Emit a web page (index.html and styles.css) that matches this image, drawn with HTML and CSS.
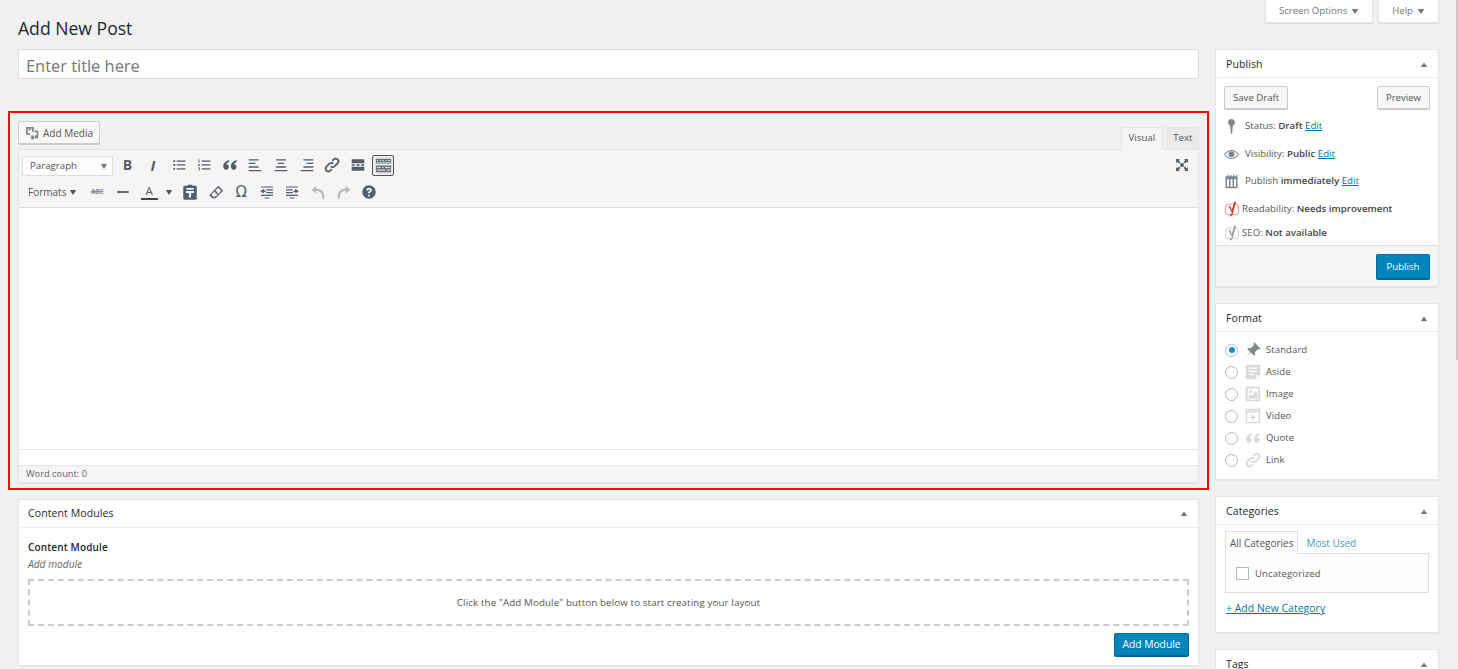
FILE: index.html
```html
<!DOCTYPE html>
<html lang="en">
<head>
<meta charset="utf-8">
<title>Add New Post</title>
<link rel="stylesheet" href="styles.css">
</head>
<body>
<svg class="defs" width="0" height="0" aria-hidden="true">
  <symbol id="tri-up" viewBox="0 0 10 8"><path d="M5 1.500 9 7H1z"/></symbol>
  <symbol id="tri-down" viewBox="0 0 10 8"><path d="M1 1h8L5 7z"/></symbol>
  <symbol id="quote" viewBox="0 0 20 20"><path d="M9 4.500C5.500 5.500 2.500 7.500 2.500 11.500c0 2.200 1.300 3.800 3.100 3.800s3.100-1.400 3.100-3.100-1.200-2.900-2.800-2.900c.3-1.200 1.600-2.200 3.100-2.900zM17.500 4.500c-3.500 1-6.500 3-6.500 7 0 2.200 1.300 3.800 3.100 3.800s3.100-1.400 3.100-3.100-1.200-2.900-2.800-2.900c.3-1.200 1.600-2.200 3.100-2.900z"/></symbol>
  <symbol id="link" viewBox="0 0 20 20"><path fill="none" stroke="currentColor" stroke-width="2" d="M8.500 11.500a3 3 0 0 0 4.300 0l3.400-3.400a3 3 0 0 0-4.300-4.300l-1.600 1.600M11.500 8.500a3 3 0 0 0-4.300 0l-3.400 3.400a3 3 0 0 0 4.300 4.300l1.600-1.600"/></symbol>
</svg>

<div class="page">
  <div class="screen-tabs">
    <span class="screen-tab">Screen Options <svg class="tri"><use href="#tri-down"/></svg></span>
    <span class="screen-tab">Help <svg class="tri"><use href="#tri-down"/></svg></span>
  </div>

  <div class="columns">
    <main class="main">
      <h1 class="page-title">Add New Post</h1>
      <div class="title-input">Enter title here</div>

      <section class="editor-frame">
        <div class="editor-tools">
          <button class="btn media-btn">
            <svg class="media-icon" viewBox="0 0 20 20"><path fill-rule="evenodd" d="M1.500 1.500h11v6.800H10V4H4v6h3.200v2.500H1.500zM5.300 5.300a1.400 1.400 0 1 1 2.800 0 1.400 1.400 0 0 1-2.800 0zM13.500 6.500h5.500v9a2.600 2.600 0 1 1-2.200-2.600V9h-3.300zM8 13.500h5v3.500a2.300 2.300 0 1 1-2.200-2.300H8z"/></svg>
            Add Media
          </button>
          <div class="editor-tabs">
            <span class="editor-tab active">Visual</span>
            <span class="editor-tab">Text</span>
          </div>
        </div>

        <div class="editor-box">
          <div class="toolbar">
            <div class="tb-row">
              <div class="tb-select">Paragraph <svg class="tri"><use href="#tri-down"/></svg></div>
              <span class="tb tb-bold">B</span>
              <span class="tb tb-ital">I</span>
              <span class="tb tb-sm"><svg viewBox="0 0 20 20"><path d="M7 4.500h11V6H7zM7 9.200h11v1.500H7zM7 14h11v1.500H7zM3 4h2.200v2.200H3zM3 8.900h2.200v2.200H3zM3 13.700h2.200v2.200H3z"/></svg></span>
              <span class="tb tb-sm"><svg viewBox="0 0 20 20"><path d="M7 4.500h11V6H7zM7 9.200h11v1.500H7zM7 14h11v1.500H7zM3.200 3h1.100v4.200H3.200zM2.500 8.700h2.400v.9L3.700 10.600h1.200v.7H2.500v-.8l1.400-1.100H2.500zM2.500 13h2.400v3.500H2.500v-.7h1.600v-.7H3v-.6h1.100v-.8H2.500z"/></svg></span>
              <span class="tb"><svg><use href="#quote"/></svg></span>
              <span class="tb"><svg viewBox="0 0 20 20"><path d="M3 3.500h11V5H3zM3 7.500h7.500V9H3zM3 11.500h11V13H3zM3 15.500h14V17H3z"/></svg></span>
              <span class="tb"><svg viewBox="0 0 20 20"><path d="M4.500 3.500h11V5h-11zM6.500 7.500h7V9h-7zM4.500 11.500h11V13h-11zM3 15.500h14V17H3z"/></svg></span>
              <span class="tb"><svg viewBox="0 0 20 20"><path d="M6 3.500h11V5H6zM9.500 7.500H17V9H9.500zM6 11.500h11V13H6zM3 15.500h14V17H3z"/></svg></span>
              <span class="tb"><svg><use href="#link"/></svg></span>
              <span class="tb"><svg viewBox="0 0 20 20"><path d="M3 3.500h14v4.500H3zM3 9.300h3.500v1.400H3zM8.200 9.300h3.600v1.400H8.200zM13.500 9.300H17v1.400h-3.500zM3 12h14v4.500H3z"/></svg></span>
              <span class="tb kitchen"><svg viewBox="0 0 20 20"><path d="M2 3h16v5H2zM2 10h16v7H2z" fill="#6b7076"/><path d="M3 4.200h1.500v1H3zM6 4.200h1.500v1H6zM9 4.200h1.500v1H9zM12 4.200h1.500v1H12zM15 4.200h2v1h-2zM3 6.200h14v.8H3zM3 11.500h4v1.200H3zM8.500 11.500H10v1.200H8.500zM11.500 11.500H17v1.200h-5.500zM3 14.200h9v1.200H3zM13.500 14.200H17v1.200h-3.500z" fill="#dcdcdc"/></svg></span>
              <span class="tb tb-end"><svg viewBox="0 0 20 20"><path d="M1.500 1.500H7L5.300 3.300 7.800 5.800 5.800 7.800 3.300 5.300 1.500 7zM18.500 1.500V7l-1.800-1.700-2.500 2.500-2-2 2.500-2.500L13 1.500zM1.500 18.500V13l1.800 1.700 2.500-2.500 2 2-2.500 2.500L7 18.500zM18.500 18.500H13l1.700-1.800-2.500-2.500 2-2 2.500 2.500L18.500 13zM7.500 7.500h5v5h-5z"/></svg></span>
            </div>
            <div class="tb-row tb-row-2">
              <span class="tb-formats">Formats <svg class="tri"><use href="#tri-down"/></svg></span>
              <span class="tb tb-abc">ABC</span>
              <span class="tb"><svg viewBox="0 0 20 20"><path d="M3.500 9h13v2h-13z"/></svg></span>
              <span class="tb-color">
                <span class="color-a">A</span>
                <svg class="tri"><use href="#tri-down"/></svg>
              </span>
              <span class="tb"><svg viewBox="0 0 20 20"><path d="M7.500 3V2h5v1H16a1.500 1.500 0 0 1 1.500 1.500V17A1.500 1.500 0 0 1 16 18.500H4A1.500 1.500 0 0 1 2.500 17V4.500A1.500 1.500 0 0 1 4 3zM6 5.500v2h8v-2H9zM5.500 9v2h3.300v5h2.400v-5h3.300V9z" fill-rule="evenodd"/></svg></span>
              <span class="tb"><svg viewBox="0 0 20 20"><path d="M12.500 3 18 8.500 9.500 17H6l-3.500-3.500zM12.500 5.200 9.300 8.400 13 12.100l2.800-3.600zM8.200 9.500 4.800 12.800l2 2.500h2l3-2.100z" fill-rule="evenodd"/></svg></span>
              <span class="tb tb-omega">Ω</span>
              <span class="tb tb-sm"><svg viewBox="0 0 20 20"><path d="M2.500 3h15v1.500h-15zM9 6.500h8.500V8H9zM9 10h8.500v1.500H9zM2.500 13.500h15V15h-15zM7 17h6v1H7zM1.500 9 6 6v2h2v2H6v2z"/></svg></span>
              <span class="tb tb-sm"><svg viewBox="0 0 20 20"><path d="M2.500 3h15v1.500h-15zM2.500 6.500H11V8H2.500zM2.500 10H11v1.500H2.500zM2.500 13.500h15V15h-15zM7 17h6v1H7zM18.500 9 14 6v2h-2v2h2v2z"/></svg></span>
              <span class="tb muted"><svg viewBox="0 0 20 20"><path d="M3 7.500 8 3v3c5 0 9 3 9 9v2.500h-2.500V15c0-3.800-2.700-6-6.500-6v3z"/></svg></span>
              <span class="tb muted"><svg viewBox="0 0 20 20"><path d="M17 7.500 12 3v3c-5 0-9 3-9 9v2.500h2.500V15c0-3.800 2.700-6 6.500-6v3z"/></svg></span>
              <span class="tb"><svg viewBox="0 0 20 20"><path fill-rule="evenodd" d="M10 2.500a7.500 7.500 0 1 1 0 15 7.500 7.500 0 0 1 0-15zM7 8.200h2c.1-.7.500-1 1-1 .6 0 1 .3 1 .9 0 .5-.3.8-.9 1.200-.9.600-1.200 1.200-1.200 2.200h1.900c0-.5.200-.8.900-1.200 1-.6 1.400-1.300 1.400-2.300 0-1.700-1.300-2.600-3.100-2.600-1.700 0-2.900.9-3 2.800zM8.900 13v1.900h1.900V13z"/></svg></span>
            </div>
          </div>
          <div class="editor-content"></div>
          <div class="editor-resize"></div>
          <div class="status-bar">Word count: 0</div>
        </div>
      </section>

      <section class="box modules-box">
        <header class="box-head">Content Modules <svg class="tri"><use href="#tri-up"/></svg></header>
        <div class="modules-body">
          <div class="field-title">Content Module</div>
          <div class="field-sub">Add module</div>
          <div class="dropzone">Click the "Add Module" button below to start creating your layout</div>
          <div class="right-row"><button class="btn primary">Add Module</button></div>
        </div>
      </section>
    </main>

    <aside class="side">
      <section class="box publish-box">
        <header class="box-head">Publish <svg class="tri"><use href="#tri-up"/></svg></header>
        <div class="publish-actions">
          <button class="btn">Save Draft</button>
          <button class="btn">Preview</button>
        </div>
        <div class="pub-row r-status">
          <svg class="pub-icon" viewBox="0 0 20 20"><path d="M10 0a4.600 4.600 0 0 1 1.800 8.800L10.800 19.500H9.200L8.200 8.800A4.600 4.600 0 0 1 10 0z"/></svg>
          <span>Status: <b>Draft</b> <a>Edit</a></span>
        </div>
        <div class="pub-row r-vis">
          <svg class="pub-icon" viewBox="0 0 20 20"><path fill-rule="evenodd" d="M10 4c4 0 7.500 2.500 10 6-2.500 3.500-6 6-10 6s-7.500-2.500-10-6c2.500-3.500 6-6 10-6zM10 5.300C7 5.300 3.700 7.300 1.800 10c1.900 2.700 5.200 4.700 8.200 4.700s6.300-2 8.200-4.700c-1.900-2.700-5.200-4.700-8.200-4.700z"/><circle cx="10" cy="9.800" r="4"/></svg>
          <span>Visibility: <b>Public</b> <a>Edit</a></span>
        </div>
        <div class="pub-row r-date">
          <svg class="pub-icon" viewBox="0 0 20 20"><path fill-rule="evenodd" d="M2 3h2.500V1H6v2h2.500V1H10v2h2.500V1H14v2h2.500V1H18v18H2zM4 7v10h2.500V7zM8.700 7v10h2.600V7zM13.500 7v10H16V7z"/></svg>
          <span><span>Publish <b>immediately</b></span> <a>Edit</a></span>
        </div>
        <div class="pub-row r-read">
          <svg class="yoast" viewBox="0 0 20 20"><path fill="none" stroke="#dc3232" stroke-width="1" d="M5 4h10a3 3 0 0 1 3 3v7a3 3 0 0 1-3 3H5a3 3 0 0 1-3-3V7a3 3 0 0 1 3-3z" opacity=".7"/><path fill="#fff" stroke="#fff" stroke-width="2" d="M7 6h2l1.500 5L13 1h2.500"/><path fill="#dc3232" d="M5.500 6.500h2.300l2 5L12.600 1H15l-4 15c-.4 1.700-1.500 3-3.500 3.500v-1.800c1-.4 1.700-1 2-2.300l.3-1.100z"/></svg>
          <span>Readability: <b>Needs improvement</b></span>
        </div>
        <div class="pub-row r-seo">
          <svg class="yoast" viewBox="0 0 20 20"><path fill="none" stroke="#aaa" stroke-width="1" d="M5 4h10a3 3 0 0 1 3 3v7a3 3 0 0 1-3 3H5a3 3 0 0 1-3-3V7a3 3 0 0 1 3-3z" opacity=".7"/><path fill="#fff" stroke="#fff" stroke-width="2" d="M7 6h2l1.500 5L13 1h2.500"/><path fill="#999" d="M5.500 6.500h2.300l2 5L12.600 1H15l-4 15c-.4 1.700-1.500 3-3.500 3.500v-1.800c1-.4 1.700-1 2-2.300l.3-1.100z"/></svg>
          <span>SEO: <b>Not available</b></span>
        </div>
        <div class="publish-foot"><button class="btn primary">Publish</button></div>
      </section>

      <section class="box format-box">
        <header class="box-head">Format <svg class="tri"><use href="#tri-up"/></svg></header>
        <ul class="formats">
          <li><span class="radio checked"></span><svg class="fmt dark" viewBox="0 0 20 20"><path d="M11.500 1.500 18.500 8.500 17 9.500 15.800 8.800 12 12.500c.6 1.500.3 3-.7 4L7.600 12.900 2 18l5.100-5.600L3.500 8.700c1-1 2.500-1.300 4-.7l3.700-3.800-.7-1.200z"/></svg>Standard</li>
          <li><span class="radio"></span><svg class="fmt" viewBox="0 0 20 20"><path fill-rule="evenodd" d="M2 2h16v11l-5 5H2zM5 5v1.500h10V5zM5 8.500V10h10V8.500zM5 12v1.500h6V12zM13 13.500V17l4-3.500z"/></svg>Aside</li>
          <li><span class="radio"></span><svg class="fmt" viewBox="0 0 20 20"><path fill-rule="evenodd" d="M2 2h16v16H2zM4 4v12h12V4zM7.500 5.500a1.700 1.700 0 1 1 0 3.400 1.700 1.700 0 0 1 0-3.400zM5 15v-3l2.500-1.500L9.500 12 13 6l2 3v6z"/></svg>Image</li>
          <li><span class="radio"></span><svg class="fmt" viewBox="0 0 20 20"><path fill-rule="evenodd" d="M2 2h16v16H2zM3.500 6v10.500h13V6zM3.500 3.500v1.200h2v-1.200zM7 3.500v1.200h2v-1.200zM10.500 3.500v1.200h2v-1.200zM14 3.500v1.200h2v-1.200zM8 8l5.500 3.300L8 14.500z"/></svg>Video</li>
          <li><span class="radio"></span><svg class="fmt"><use href="#quote"/></svg>Quote</li>
          <li><span class="radio"></span><svg class="fmt"><use href="#link"/></svg>Link</li>
        </ul>
      </section>

      <section class="box cat-box">
        <header class="box-head">Categories <svg class="tri"><use href="#tri-up"/></svg></header>
        <div class="cat-tabs">
          <span class="cat-tab active">All Categories</span>
          <a class="cat-tab">Most Used</a>
        </div>
        <div class="cat-panel"><span class="checkbox"></span>Uncategorized</div>
        <a class="cat-add">+ Add New Category</a>
      </section>

      <section class="box tags-box">
        <header class="box-head">Tags <svg class="tri"><use href="#tri-up"/></svg></header>
      </section>
    </aside>
  </div>
</div>
<div class="scroll-thumb"></div>
</body>
</html>
```

FILE: styles.css
```css
* { box-sizing: border-box; }
html, body { margin: 0; height: 100%; overflow: hidden; }
body {
  background: #f1f1f1;
  color: #444;
  font: 10.5px/1.4 "Open Sans", "Noto Sans", sans-serif;
}
.defs { position: absolute; }
.page { height: 669px; overflow: hidden; padding: 0 19px 0 18px; }
.tri { width: 8px; height: 7px; fill: #72777c; flex: none; }
button { font: inherit; white-space: nowrap; }

.screen-tabs { display: flex; justify-content: flex-end; gap: 5px; height: 0; }
.screen-tab {
  height: 23px; padding: 0 13px;
  display: flex; align-items: center; gap: 4px;
  background: #fff; border: 1px solid #e4e4e4; border-top: 0;
  box-shadow: 0 1px 1px rgba(0,0,0,.08); color: #72777c;
  font-size: 9.600px;
}
.columns { display: flex; gap: 16px; }
.main { width: 1181px; flex: none; }
.side { width: 224px; flex: none; padding-top: 49px; display: flex; flex-direction: column; gap: 16px; }

.page-title { margin: 0; height: 49px; padding-top: 15px; font-size: 17.600px; line-height: 26px; font-weight: 400; color: #23282d; }
.title-input {
  height: 30px; padding: 0 7px; line-height: 31px;
  background: #fff; border: 1px solid #ddd;
  font-size: 16.400px; color: #72777c;
}
.editor-frame { margin: 32px -10px 0; padding: 8px; border: 2px solid #f00; height: 379px; }
.editor-tools { display: flex; justify-content: space-between; align-items: flex-end; height: 28px; }
.btn {
  display: inline-flex; align-items: center; justify-content: center; gap: 5px;
  height: 24px; padding: 0 8px;
  background: #f7f7f7; border: 1px solid #ccc; border-radius: 2px;
  box-shadow: 0 1px 0 #ccc; color: #555;
  font-size: 9.600px;
}
.media-btn { width: 82px; height: 23px; align-self: flex-start; gap: 4px; padding: 0 6px; font-size: 10px; }
.media-icon { width: 14px; height: 14px; fill: #82878c; flex: none; }
.primary { background: #0085ba; border-color: #0073aa #006799 #006799; box-shadow: 0 1px 0 #006799; color: #fff; height: 23px; }
.editor-tabs { display: flex; gap: 4px; align-items: flex-end; }
.editor-tab {
  height: 22px; padding: 0 5.500px 2px; display: flex; align-items: center;
  background: #ebebeb; border: 1px solid #e5e5e5; border-bottom: 0;
  color: #555; font-size: 9.700px;
}
.editor-tab.active { background: #f5f5f5; height: 23px; padding: 0 6.500px 3px; position: relative; top: 1px; }
.editor-box { border: 1px solid #e5e5e5; background: #fff; box-shadow: 0 1px 1px rgba(0,0,0,.04); }
.toolbar { height: 58px; padding: 2px 4px 0 3px; background: #f5f5f5; border-bottom: 1px solid #dedede; }
.tb-row { display: flex; align-items: center; height: 26px; }
.tb-row-2 { margin-top: 1px; }
.tb-select {
  width: 91px; height: 20px; padding: 0 4px 0 7px; margin: 2px 1.600px 0 0;
  display: flex; align-items: center; justify-content: space-between;
  background: #fdfdfd; border: 1px solid #ddd; color: #555; font-size: 9.700px;
}
.tb { width: 25.600px; height: 24px; display: flex; align-items: center; justify-content: center; color: #555d66; flex: none; }
.tb svg { width: 18px; height: 18px; fill: currentColor; }
.tb-sm svg { width: 16px; height: 16px; }
.tb-bold { font: 700 14px/1 "Open Sans", sans-serif; }
.tb-ital { font: italic 700 15px/1 "Open Sans", sans-serif; }
.tb-abc { font: 700 6.500px/1 "Open Sans", sans-serif; color: #8a8f94; text-decoration: line-through; letter-spacing: -.2px; }
.tb-omega { font: 400 15px/1 "DejaVu Sans", sans-serif; }
.tb.muted { color: #bbb; }
.tb.kitchen svg { width: 19px; height: 19px; }
.tb.kitchen { width: 22px; height: 21px; margin-left: 1.800px; border: 1px solid #555; border-radius: 2px; background: #ebebeb; }
.tb-end { margin-left: auto; width: 22px; margin-right: 1px; }
.tb-end svg { width: 14px; height: 14px; }
.tb-formats { width: 62.400px; flex: none; padding-left: 6px; color: #555; font-size: 10px; display: flex; gap: 3px; align-items: center; }
.tb-formats .tri { fill: #555; }
.tb-color { width: 41.600px; flex: none; display: flex; align-items: center; gap: 7px; padding-left: 5px; color: #555; }
.color-a { display: block; width: 17px; text-align: center; border-bottom: 2px solid #444; font-size: 11.500px; line-height: 14px; }
.tb-color .tri { fill: #555; }
.editor-content { height: 241px; }
.editor-resize { height: 16px; border-top: 1px solid #e5e5e5; }
.status-bar { height: 17px; padding: 0 7px; background: #f5f5f5; border-top: 1px solid #e5e5e5; color: #666; font-size: 9.300px; line-height: 16px; }

.box { background: #fff; border: 1px solid #e5e5e5; box-shadow: 0 1px 1px rgba(0,0,0,.04); }
.box-head {
  height: 28px; padding: 0 10px 0 9px; display: flex; align-items: center; justify-content: space-between;
  border-bottom: 1px solid #eee; color: #23282d; font-size: 10.500px; letter-spacing: .1px;
}
.side .box-head { padding: 2px 10px 0; }
.modules-box { margin-top: 9px; height: 167px; }
.modules-body { padding: 12px 9px 0; }
.field-title { font-weight: 600; color: #23282d; font-size: 10px; line-height: 15px; letter-spacing: .15px; }
.field-sub { font-style: italic; color: #666; font-size: 10.200px; line-height: 14px; margin-top: 2px; }
.dropzone { height: 47px; margin-top: 8px; border: 2px dashed #ccc; display: flex; align-items: center; justify-content: center; color: #555; font-size: 9.750px; letter-spacing: .12px; }
.right-row { display: flex; justify-content: flex-end; margin-top: 7px; }
.modules-box .primary { width: 75px; font-size: 10.300px; }

.publish-box { height: 238px; display: flex; flex-direction: column; }
.publish-actions { display: flex; justify-content: space-between; padding: 8px 8px 0; }
.publish-actions .btn { height: 23px; }
.pub-row { display: flex; align-items: center; gap: 6px; padding-left: 8px; height: 18px; color: #555; font-size: 9.700px; }
.pub-row b { font-weight: 600; color: #444; }
.pub-row a { color: #0073aa; text-decoration: underline; }
.pub-icon { width: 15px; height: 15px; fill: #82878c; flex: none; }
.yoast { width: 16px; height: 18px; flex: none; margin-right: -4px; }
.r-status { margin-top: 8px; }
.r-vis { margin-top: 10px; }
.r-date { margin-top: 9px; }
.r-read { margin-top: 10px; }
.r-seo { margin-top: 6px; }
.publish-foot { margin-top: auto; height: 41px; display: flex; justify-content: flex-end; align-items: center; padding: 1px 8px 0 0; background: #f5f5f5; border-top: 1px solid #ddd; }
.publish-foot .btn { width: 54px; height: 25px; }

.format-box { height: 177px; }
.formats { list-style: none; margin: 0; padding: 7px 8px 0 9px; }
.formats li { height: 22px; display: flex; align-items: center; color: #555; font-size: 9.500px; letter-spacing: .1px; }
.radio { width: 13px; height: 13px; border: 1px solid #b4b9be; border-radius: 50%; margin-right: 5.500px; background: #fff; display: flex; align-items: center; justify-content: center; flex: none; }
.radio.checked::after { content: ""; width: 6px; height: 6px; background: #1e8cbe; border-radius: 50%; }
.fmt { width: 18px; height: 18px; margin-right: 4.500px; fill: #d9d9d9; color: #d9d9d9; flex: none; }
.fmt.dark { fill: #82878c; }

.cat-box { height: 137px; }
.cat-tabs { display: flex; margin: 6px 0 0 9px; height: 23px; }
.cat-tab { padding: 0 4px; display: flex; align-items: center; color: #0073aa; font-size: 10px; border: 1px solid transparent; }
.cat-tab + .cat-tab { padding-left: 7px; opacity: .75; }
.cat-tab.active { color: #555; background: #fdfdfd; border-color: #ddd; border-bottom-color: #fdfdfd; position: relative; z-index: 1; }
.cat-panel { margin: -1px 9px 0; height: 40px; padding: 1px 0 0 10px; background: #fdfdfd; border: 1px solid #ddd; display: flex; align-items: center; gap: 6px; color: #555; font-size: 9.500px; letter-spacing: .12px; }
.checkbox { width: 13px; height: 13px; background: #fff; border: 1px solid #b4b9be; flex: none; }
.cat-add { display: block; margin: 8px 0 0 10px; color: #0073aa; text-decoration: underline; font-size: 10.300px; letter-spacing: .1px; }
.tags-box { height: 60px; }

.scroll-thumb { position: absolute; top: 0; right: 0; width: 2px; height: 360px; background: #c8c8c8; }
```
